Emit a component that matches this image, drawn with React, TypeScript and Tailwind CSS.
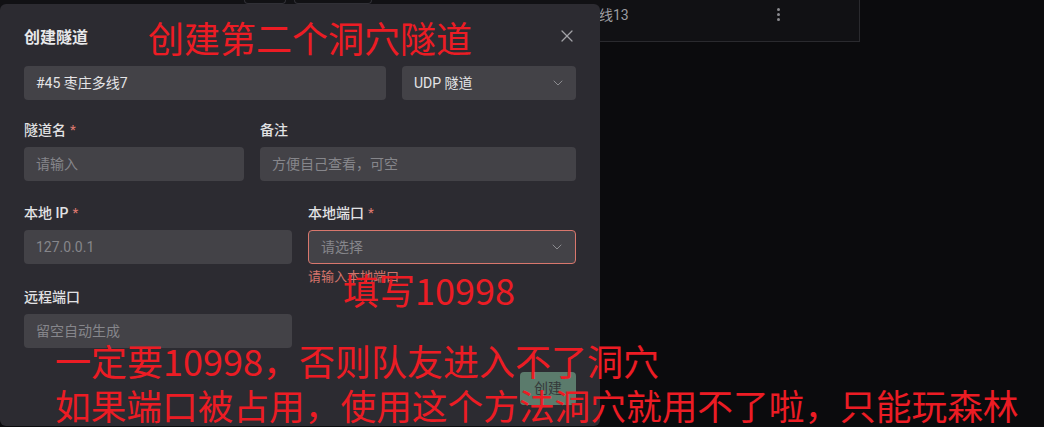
import { ChevronDown, X } from 'lucide-react'

const ui = { fontFamily: 'Roboto, "Noto Sans CJK SC", sans-serif' }
const cjk = { fontFamily: '"Noto Sans CJK SC", sans-serif' }

function Label({ text, required }: { text: string; required?: boolean }) {
  return (
    <div className="h-5 mb-[7px] flex items-center gap-1 text-[14px] leading-5 font-medium text-[#e2e2e4]">
      <span>{text}</span>
      {required && <span className="text-[#d9766d] text-[13px]">*</span>}
    </div>
  )
}

function Field({ placeholder, value }: { placeholder?: string; value?: string }) {
  return (
    <div className="h-[34px] rounded bg-[#434247] px-3 flex items-center text-[14px]">
      {value ? <span className="text-[#e4e4e6]">{value}</span> : <span className="text-[#86868b]">{placeholder}</span>}
    </div>
  )
}

function Select({ value, placeholder, error }: { value?: string; placeholder?: string; error?: boolean }) {
  return (
    <div
      className={
        'h-[34px] rounded bg-[#434247] pl-3 pr-[10px] flex items-center justify-between text-[14px] ' +
        (error ? 'border border-[#d9776d]' : '')
      }
    >
      {value ? <span className="text-[#e4e4e6]">{value}</span> : <span className="text-[#86868b]">{placeholder}</span>}
      <ChevronDown size={16} strokeWidth={1.5} className="text-[#8c8c90]" />
    </div>
  )
}

export default function App() {
  return (
    <div className="relative w-[1044px] h-[427px] overflow-hidden bg-[#0b0b0d]" style={ui}>
      {/* page behind the dialog */}
      <div className="w-[860px] h-[42px] bg-[#111114] border-b border-r border-[#2a2a2e] flex items-start">
        <div className="ml-[244px] w-[42px] h-[4px] border-b border-x border-[#303036] rounded-b" />
        <div className="ml-[8px] w-[78px] h-[4px] border-b border-x border-[#303036] rounded-b" />
        <div className="ml-[185px] mt-[5px] text-[14px] leading-5 text-[#9c9ca0]" style={ui}>枣庄多线13</div>
        <div className="ml-[148px] mt-[8px] flex flex-col gap-[2px]">
          <span className="w-[3px] h-[3px] rounded-full bg-[#8a8a8e]" />
          <span className="w-[3px] h-[3px] rounded-full bg-[#8a8a8e]" />
          <span className="w-[3px] h-[3px] rounded-full bg-[#8a8a8e]" />
        </div>
      </div>

      {/* dialog */}
      <div className="absolute left-0 top-[4px] w-[600px] h-[422px] rounded-md bg-[#2c2b31] px-6 pt-5" style={ui}>
        <div className="h-6 flex items-center justify-between">
          <h2 className="text-[16px] font-bold text-[#e8e8ea]" style={cjk}>创建隧道</h2>
          <X size={20} strokeWidth={1.5} className="text-[#a3a3a7] -mr-[1px]" />
        </div>

        <div className="mt-[18px] flex gap-4">
          <div className="flex-1">
            <Field value="#45 枣庄多线7" />
          </div>
          <div className="w-[174px]">
            <Select value="UDP 隧道" />
          </div>
        </div>

        <div className="mt-[20px] grid grid-cols-[220px_1fr] gap-x-4">
          <div>
            <Label text="隧道名" required />
            <Field placeholder="请输入" />
          </div>
          <div>
            <Label text="备注" />
            <Field placeholder="方便自己查看，可空" />
          </div>
        </div>

        <div className="mt-[22px] grid grid-cols-2 gap-x-4">
          <div>
            <Label text="本地 IP" required />
            <Field placeholder="127.0.0.1" />
          </div>
          <div>
            <Label text="本地端口" required />
            <Select placeholder="请选择" error />
            <div className="mt-[3px] h-5 text-[13px] leading-5 text-[#d4746b]">请输入本地端口</div>
          </div>
        </div>

        <div className="grid grid-cols-2 gap-x-4">
          <div>
            <Label text="远程端口" />
            <Field placeholder="留空自动生成" />
          </div>
        </div>

        <div className="mt-[24px] flex justify-end">
          <button className="w-[56px] h-[33px] rounded bg-[#5b7b6c] text-[14px] text-[#34393a]">创建</button>
        </div>
      </div>

      {/* red annotations */}
      <div className="absolute left-[148px] top-[19px] text-[36px] leading-9 text-[#ec1c24] whitespace-nowrap" style={cjk}>
        创建第二个洞穴隧道
      </div>
      <div className="absolute left-[343px] top-[271px] text-[36px] leading-9 text-[#ec1c24] whitespace-nowrap" style={cjk}>
        填写10998
      </div>
      <div className="absolute left-[55px] top-[342px] text-[36px] leading-9 text-[#ec1c24] whitespace-nowrap" style={cjk}>
        一定要10998，否则队友进入不了洞穴
      </div>
      <div className="absolute left-[55px] top-[387px] text-[35.7px] leading-9 text-[#ec1c24] whitespace-nowrap" style={cjk}>
        如果端口被占用，使用这个方法洞穴就用不了啦，只能玩森林
      </div>
    </div>
  )
}
